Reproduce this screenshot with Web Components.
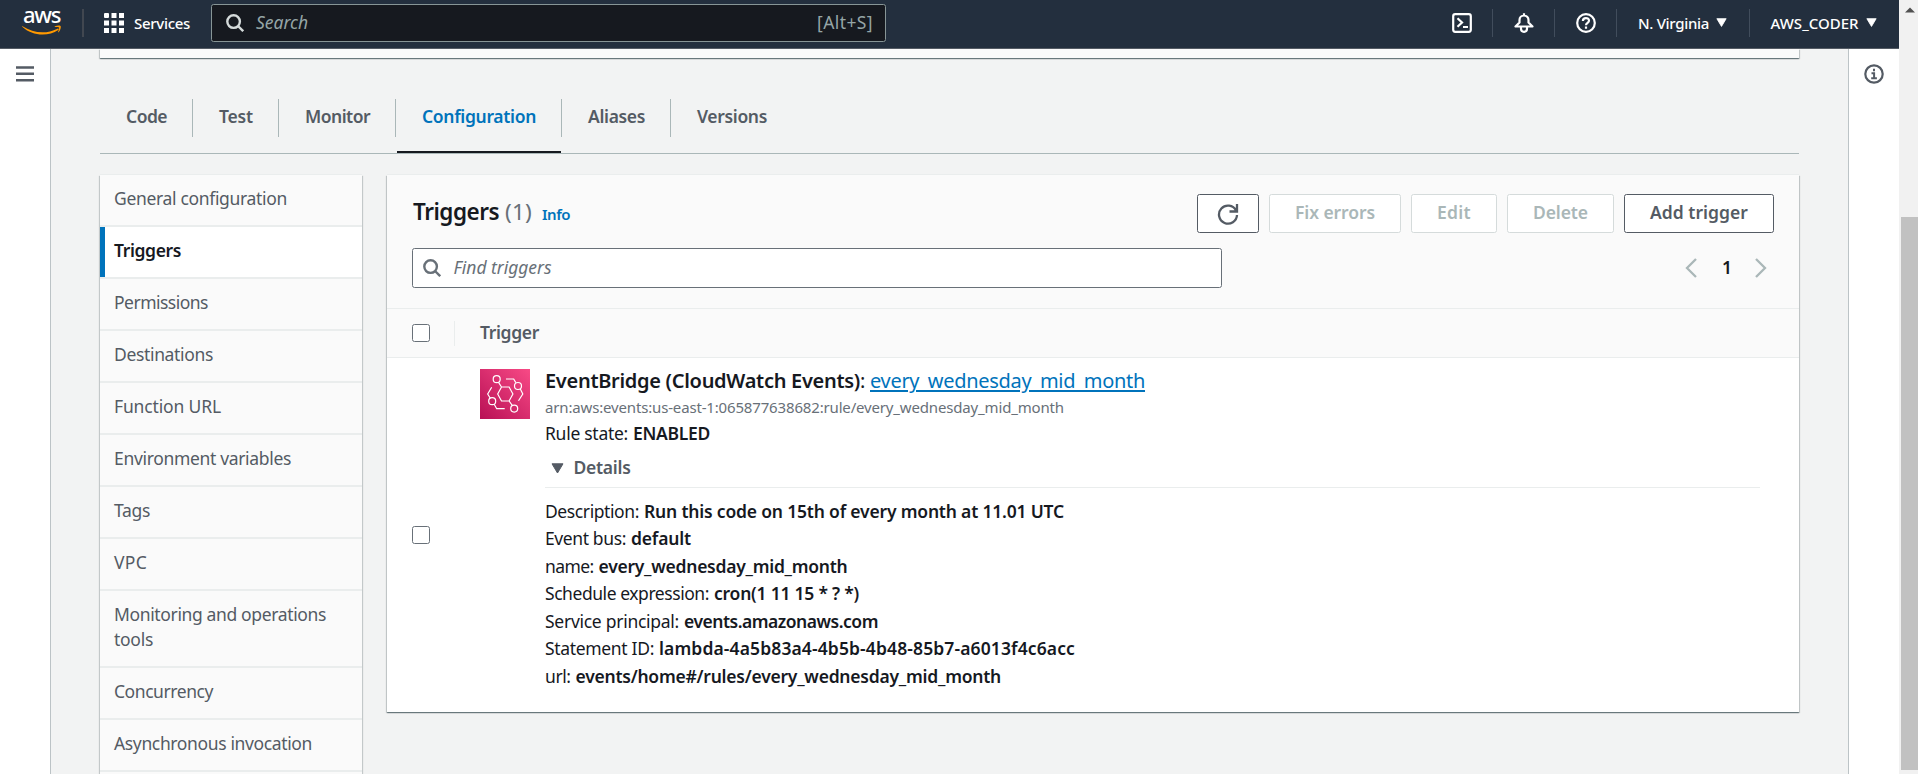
<!DOCTYPE html>
<html lang="en"><head><meta charset="utf-8"><title>Lambda - Triggers</title>
<style>
html,body{margin:0;height:100%;overflow:hidden}
body{font:17.5px/25px "Noto Sans","Open Sans",sans-serif;color:#16191f;background:#f2f3f3}
</style></head><body>
<console-page></console-page>
<script>
const define=(name,html,setup)=>{
  const t=document.createElement('template');t.innerHTML=html;
  customElements.define(name,class extends HTMLElement{
    constructor(){super();this.attachShadow({mode:'open'}).append(t.content.cloneNode(true));}
    connectedCallback(){setup&&setup(this,this.shadowRoot);}
  });
};

/* One line of text whose tracking is adjusted to a given advance width. */
define('ui-text',`<style>
:host{display:block;white-space:nowrap;flex:none;line-height:22px;padding-bottom:3px}
:host([b]){font-weight:600}:host([m]){font-weight:500}:host([i]){font-style:italic}
:host([u]) span{text-decoration:underline;text-decoration-thickness:1.5px;text-underline-offset:2px}
span{display:inline-block}
</style><span><slot></slot></span>`,(el,root)=>{
  const w=+el.getAttribute('w');if(!w)return;
  const s=root.querySelector('span');
  s.style.letterSpacing=((w-s.getBoundingClientRect().width)/el.textContent.length).toFixed(3)+'px';
  el.style.width=w+'px';
});

define('ui-caret',`<style>:host{display:block;flex:none;width:13px}svg{display:block;width:100%}</style>
<svg viewBox="0 0 13 11"><path d="M1 .8h11L6.5 10z" fill="currentColor" stroke="currentColor" stroke-linejoin="round"/></svg>`);

define('ui-glass',`<style>:host{display:block;flex:none;width:18px;height:18px}svg{display:block}</style>
<svg width="18" height="18" viewBox="0 0 18 18" fill="none" stroke="currentColor" stroke-width="2.4"><circle cx="7.6" cy="7.6" r="6.3"/><path d="M12 12l5.2 5.2"/></svg>`);

define('ui-check',`<style>:host{display:block;box-sizing:border-box;width:18px;height:18px;border:1.25px solid #687078;border-radius:2.5px;background:#fff;flex:none}</style>`);

define('top-bar',`<style>
:host{display:flex;box-sizing:border-box;height:49px;background:#232f3e;border-bottom:1px solid #545b64;color:#fff;align-items:center;flex:none;font-size:15px}
svg{display:block;flex:none}
.sep{width:1px;height:28px;background:#414d5c;flex:none;margin-bottom:2px}
.logo{align-self:flex-start;width:40px;margin:3px 20px 0 22px}
.logo ui-text{font-size:22px;padding:0;margin-left:1px}
.first{width:2px;background:#414750}
.grid{margin:-2px 10px 0 20px}
.search{display:flex;box-sizing:border-box;width:675px;height:38px;margin:-2px 0 0 21px;border:1px solid #879596;border-radius:2.5px;background:#16191f;align-items:center;padding:0 12px 0 14px;color:#95a5a6;font-size:17.5px;gap:12px}
ui-glass{color:#d5dbdb}
.gap{flex:1}
.ic{padding:0 20px 2px 21px}
.menu{display:flex;align-items:center;gap:7px}
ui-caret{margin-bottom:2px;width:11px}
</style>
<div class="logo"><ui-text m w="37">aws</ui-text><svg width="40" height="11" viewBox="0 17 40 11"><path d="M.5 18.200C11 25 24 26.500 35.500 20.700c1-.4 1.700.5.8 1.200C26 29 10 28 .2 18.800c-.3-.4 0-.8.3-.6z" fill="#f90"/><path d="M33 18.300c2-1 4.600-.9 5.600-.4.6 1-.3 4.600-2 6.300-.4.3-.7.1-.5-.4.5-1.300 1.300-3.500.9-4.300-.5-.6-2.400-.5-3.800-.5-.6 0-.7-.4-.2-.7z" fill="#f90"/></svg></div>
<div class="sep first"></div>
<svg class="grid" width="20" height="20" fill="#fff"><path d="M1 0h3a1 1 0 0 1 1 1v3a1 1 0 0 1-1 1H1a1 1 0 0 1-1-1V1a1 1 0 0 1 1-1zM7.500 0h5v5h-5zM15 0h5v5h-5zM0 7.500h5v5H0zM7.500 7.500h5v5h-5zM15 7.500h5v5h-5zM0 15h5v5H0zM7.500 15h5v5h-5zM15 15h5v5h-5z"/></svg>
<ui-text m w="56">Services</ui-text>
<div class="search"><ui-glass></ui-glass><ui-text i w="52">Search</ui-text><div class="gap"></div><ui-text w="56">[Alt+S]</ui-text></div>
<div class="gap"></div>
<div class="ic" style="padding-left:0"><svg width="20" height="20" fill="none" stroke="#fff" stroke-width="2.200"><rect x="1.200" y="1.200" width="17.600" height="17.600" rx="2"/><path d="M5.500 5.300L10 9.500l-4.500 4.200M11 14h5"/></svg></div><div class="sep"></div>
<div class="ic"><svg width="20" height="20" fill="none" stroke="#fff" stroke-width="2.200" stroke-linejoin="round"><path d="M1.500 13.500h17l-4-4V7A4.500 4.500 0 0 0 5.500 7v2.500zM10 .3V3M7 14.500v1.300a3 3 0 0 0 6 0v-1.300"/></svg></div><div class="sep"></div>
<div class="ic"><svg width="20" height="20" fill="none" stroke="#fff" stroke-width="2.200"><circle cx="10" cy="10" r="8.800"/><path d="M6.900 8C6.900 4 13 4.200 13 7.700 13 9.900 10 9.700 10 12.300M10 13.500v2.200"/></svg></div><div class="sep"></div>
<div class="menu" style="padding:0 21.500px 0 21.500px"><ui-text m w="71">N. Virginia</ui-text><ui-caret></ui-caret></div><div class="sep"></div>
<div class="menu" style="padding:0 22.500px 0 21px"><ui-text m w="88">AWS_CODER</ui-text><ui-caret></ui-caret></div>`);

define('side-rail',`<style>:host{display:flex;box-sizing:border-box;width:51px;background:#fff;flex:none;justify-content:center;border-right:1px solid #bcc3c6;padding-top:15px;color:#545b64}
:host([right]){border-right:0;border-left:1px solid #bcc3c6}</style><slot></slot>`);

define('tab-item',`<style>
:host{display:flex;box-sizing:border-box;height:55px;position:relative;padding:7px 26px 0 26px;color:#545b64}
:host([last]) i{display:none}
i{position:absolute;right:0;top:1px;width:1px;height:38px;background:#aab7b8}
:host([on]){color:#0073bb}
:host([on])::after{content:"";position:absolute;left:1px;right:1px;bottom:0;height:2px;background:#16191f}
</style><slot></slot><i></i>`);

define('nav-item',`<style>
:host{display:block;box-sizing:border-box;padding:12px 10px 13px 14px;border-bottom:2px solid #eaeded;color:#545b64}
:host([on]){background:#fff;color:#16191f;box-shadow:inset 5px 0 #0073bb}
</style><slot></slot>`);

define('ui-button',`<style>
:host{display:flex;box-sizing:border-box;height:39px;border:1px solid #d5dbdb;border-radius:2.5px;background:#fff;color:#aab7b8;justify-content:center;align-items:center}
:host([live]){border-color:#545b64;color:#545b64}
</style><slot></slot>`);

define('kv-row',`<style>:host{display:flex;gap:5px;height:27.5px;align-items:center}</style><slot></slot>`);

define('event-icon',`<style>:host{display:block;flex:none;width:50px;height:50px}svg{display:block}</style>
<svg width="50" height="50" viewBox="0 0 50 50"><defs><linearGradient id="g" x1="0" y1="1" x2="1" y2="0"><stop offset="0" stop-color="#b81055"/><stop offset="1" stop-color="#f84a86"/></linearGradient></defs><rect width="50" height="50" fill="url(#g)"/>
<g fill="none" stroke="#fff" stroke-width="1.200"><path d="M21.500 18h7.600l3.800 7-3.800 7h-7.600l-3.800-7zM18.400 13.200l3.100 4.800M29.100 32l3.300 4.600M26 10h7.700l2.100 3.600M40.200 19.800l2.600 5.200-4.300 6.800M11.700 18.300L7.700 25l2.600 4.200M14.200 35.300l2.500 4.400h8"/><circle cx="16.700" cy="10.200" r="3.500"/><circle cx="38" cy="17" r="3.500"/><circle cx="12.200" cy="32.200" r="3.500"/><circle cx="34.200" cy="39.600" r="3.500"/></g></svg>`);

define('trigger-panel',`<style>
:host{display:block;box-sizing:border-box;width:1412px;height:537px;background:#fff;box-shadow:0 -1px 0 #eaeded,0 1px 1px rgba(0,28,36,.4),1px 1px 1px rgba(0,28,36,.15),-1px 1px 1px rgba(0,28,36,.15);margin-left:25px}
.head{height:133px;background:#fafafa;border-bottom:1px solid #eaeded;box-sizing:content-box}
.row{display:flex;align-items:center}
.title{padding:19px 25px 0 26px;height:39px}
.title .t{font-size:22.500px}
.sp{flex:1}
.btns{display:flex;gap:10px}
.find{padding:15px 32px 0 25px}
.box{display:flex;box-sizing:border-box;width:810px;height:40px;border:1px solid #687078;border-radius:2.500px;background:#fff;align-items:center;padding-left:10px;gap:12.500px;color:#687078}
.cols{height:48px;background:#fafafa;border-bottom:1px solid #eaeded;padding-left:25px}
.vl{width:1px;height:25px;background:#eaeded;margin:0 25px 0 24px}
.item{display:flex;padding-left:25px}
.item>ui-check{margin-top:168px}
event-icon{margin:11px 15px 0 50px}
.info{width:1215px;padding-top:9px}
.det{margin-top:6px;height:27px;color:#545b64;padding:0 0 5px 5.500px;gap:10px;border-bottom:1px solid #eaeded;margin-bottom:10.500px}
</style>
<div class="head">
 <div class="row title"><ui-text class="t" b w="86">Triggers</ui-text><ui-text class="t" w="27" style="margin-left:6px;color:#687078">(1)</ui-text><ui-text b w="28" style="font-size:15px;margin-left:10px;padding-top:3px;color:#0073bb">Info</ui-text><div class="sp"></div>
 <div class="btns">
 <ui-button live style="width:62px"><svg width="22" height="22" viewBox="0 0 22 22" fill="none" stroke="currentColor" stroke-width="2.300"><path d="M19 7.500A9 9 0 1 0 20 12M20 1v7.500h-7.500"/></svg></ui-button>
 <ui-button style="width:132px"><ui-text b w="80">Fix errors</ui-text></ui-button>
 <ui-button style="width:86px"><ui-text b w="34">Edit</ui-text></ui-button>
 <ui-button style="width:107px"><ui-text b w="55">Delete</ui-text></ui-button>
 <ui-button live style="width:150px"><ui-text b w="98">Add trigger</ui-text></ui-button></div></div>
 <div class="row find"><div class="box"><ui-glass></ui-glass><ui-text i w="98">Find triggers</ui-text></div><div class="sp"></div>
 <svg width="12" height="20" fill="none" stroke="#aab7b8" stroke-width="2.300"><path d="M11 1L2 10l9 9"/></svg><ui-text b w="9" style="color:#16191f;margin:0 24px 0 25px">1</ui-text><svg width="12" height="20" fill="none" stroke="#aab7b8" stroke-width="2.300"><path d="M1 1l9 9-9 9"/></svg></div>
</div>
<div class="row cols"><ui-check></ui-check><div class="vl"></div><ui-text b w="59" style="color:#545b64">Trigger</ui-text></div>
<div class="item"><ui-check></ui-check><event-icon></event-icon>
<div class="info">
 <div class="row" style="font-size:20px;height:31px"><ui-text b w="315">EventBridge (CloudWatch Events)</ui-text><ui-text w="5">:</ui-text><ui-text u w="275" style="margin-left:5px;color:#0073bb">every_wednesday_mid_month</ui-text></div>
 <div class="row" style="font-size:15px;height:21px;color:#687078"><ui-text w="519">arn:aws:events:us-east-1:065877638682:rule/every_wednesday_mid_month</ui-text></div>
 <div class="row" style="height:30px;gap:5px"><ui-text w="83">Rule state:</ui-text><ui-text b w="77">ENABLED</ui-text></div>
 <div class="row det"><ui-caret></ui-caret><ui-text b w="57">Details</ui-text></div>
 <kv-row><ui-text w="94">Description:</ui-text><ui-text b w="420">Run this code on 15th of every month at 11.01 UTC</ui-text></kv-row>
 <kv-row><ui-text w="81">Event bus:</ui-text><ui-text b w="60">default</ui-text></kv-row>
 <kv-row><ui-text w="48.500">name:</ui-text><ui-text b w="249">every_wednesday_mid_month</ui-text></kv-row>
 <kv-row><ui-text w="164">Schedule expression:</ui-text><ui-text b w="145">cron(1 11 15 * ? *)</ui-text></kv-row>
 <kv-row><ui-text w="134">Service principal:</ui-text><ui-text b w="194">events.amazonaws.com</ui-text></kv-row>
 <kv-row><ui-text w="109">Statement ID:</ui-text><ui-text b w="416">lambda-4a5b83a4-4b5b-4b48-85b7-a6013f4c6acc</ui-text></kv-row>
 <kv-row><ui-text w="25.500">url:</ui-text><ui-text b w="425.500">events/home#/rules/every_wednesday_mid_month</ui-text></kv-row>
</div></div>`);

define('scroll-bar',`<style>
:host{display:flex;flex-direction:column;align-items:center;box-sizing:border-box;width:19px;background:#f1f1f1;flex:none;padding:7px 0 0 2px}
div{width:17px;height:553px;background:#c1c1c1;margin-top:204px;flex:none}
svg{display:block;height:6px;flex:none}
</style><svg width="10" height="6"><path d="M0 5.500L5 .5l5 5z" fill="#505050"/></svg><div></div>`);

define('console-page',`<style>
:host{display:flex;width:1918px;height:774px;overflow:hidden;background:#f2f3f3}
.app{flex:1;display:flex;flex-direction:column;min-width:0}
.body{flex:1;display:flex;min-height:0}
main{flex:1;padding:0 49px;overflow:hidden}
.prev{height:9px;background:#fafafa;box-shadow:0 1px 1px rgba(0,28,36,.4),1px 1px 1px rgba(0,28,36,.15),-1px 1px 1px rgba(0,28,36,.15)}
.tabs{display:flex;margin-top:40px;border-bottom:1px solid #aab7b8}
.cols{display:flex;margin-top:21px;align-items:flex-start}
nav{width:262px;height:620px;background:#fafafa;box-shadow:0 -1px 0 #eaeded,0 1px 1px rgba(0,28,36,.3),1px 1px 1px rgba(0,28,36,.15),-1px 1px 1px rgba(0,28,36,.15);flex:none}
svg{display:block}
</style>
<div class="app"><top-bar></top-bar><div class="body">
<side-rail><svg width="18" height="20" stroke="currentColor" stroke-width="2.400"><path d="M0 3.500h18M0 9.800h18M0 16.200h18"/></svg></side-rail>
<main><div class="prev"></div>
<div class="tabs">
<tab-item><ui-text b w="41">Code</ui-text></tab-item><tab-item><ui-text b w="34">Test</ui-text></tab-item><tab-item><ui-text b w="65">Monitor</ui-text></tab-item><tab-item on><ui-text b w="114">Configuration</ui-text></tab-item><tab-item><ui-text b w="57">Aliases</ui-text></tab-item><tab-item last><ui-text b w="70">Versions</ui-text></tab-item></div>
<div class="cols"><nav>
<nav-item><ui-text w="173">General configuration</ui-text></nav-item>
<nav-item on><ui-text b w="67">Triggers</ui-text></nav-item>
<nav-item><ui-text w="94">Permissions</ui-text></nav-item>
<nav-item><ui-text w="99">Destinations</ui-text></nav-item>
<nav-item><ui-text w="107">Function URL</ui-text></nav-item>
<nav-item><ui-text w="177">Environment variables</ui-text></nav-item>
<nav-item><ui-text w="36">Tags</ui-text></nav-item>
<nav-item><ui-text w="33">VPC</ui-text></nav-item>
<nav-item><ui-text w="212">Monitoring and operations</ui-text><ui-text w="39">tools</ui-text></nav-item>
<nav-item><ui-text w="99">Concurrency</ui-text></nav-item>
<nav-item><ui-text w="198">Asynchronous invocation</ui-text></nav-item>
</nav><trigger-panel></trigger-panel></div>
</main>
<side-rail right><svg width="20" height="20" fill="none" stroke="currentColor" stroke-width="2.200"><circle cx="10" cy="10" r="8.700"/><path d="M10 4.800v2.400M7.500 9.200h2.600v5M7.200 14.300h5.700" stroke-width="2"/></svg></side-rail>
</div></div><scroll-bar></scroll-bar>`);
</script></body></html>
